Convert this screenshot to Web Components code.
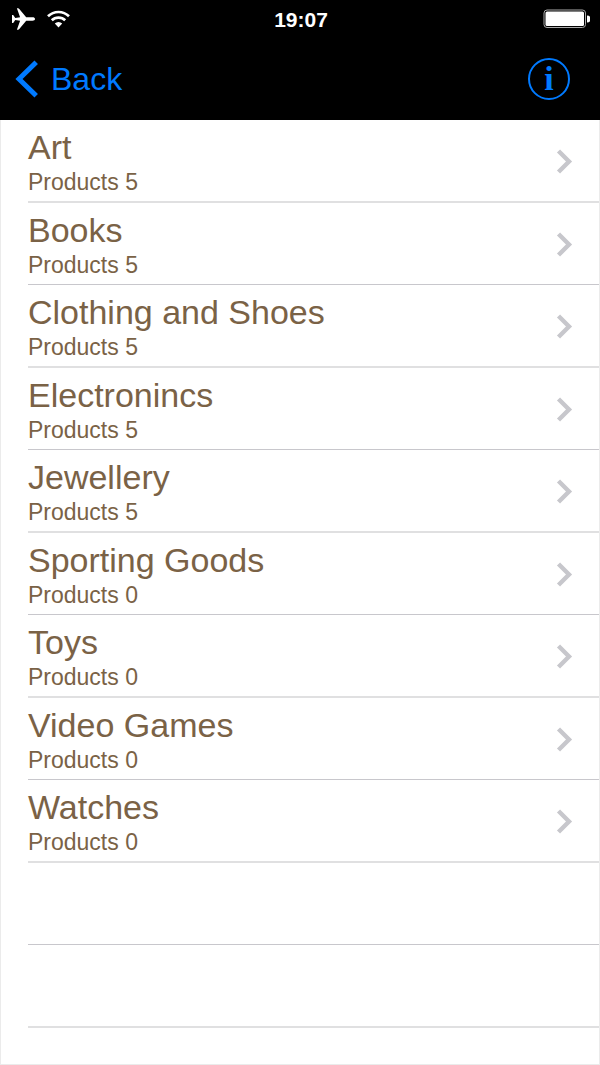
<!DOCTYPE html>
<html lang="en">
<head>
<meta charset="utf-8">
<meta name="viewport" content="width=device-width, initial-scale=1">
<title>Categories</title>
<style>
body { margin: 0; background: #fff; font-family: "Liberation Sans", Arial, sans-serif; }
</style>
</head>
<body>
<catalog-screen>
  <status-bar slot="top" time="19:07"></status-bar>
  <nav-bar slot="top">Back</nav-bar>
  <category-row count="5">Art</category-row>
  <category-row count="5">Books</category-row>
  <category-row count="5">Clothing and Shoes</category-row>
  <category-row count="5">Electronincs</category-row>
  <category-row count="5">Jewellery</category-row>
  <category-row count="0">Sporting Goods</category-row>
  <category-row count="0">Toys</category-row>
  <category-row count="0">Video Games</category-row>
  <category-row count="0">Watches</category-row>
  <category-row></category-row>
  <category-row></category-row>
</catalog-screen>
<script>
class BaseElement extends HTMLElement {
  constructor() {
    super();
    this.attachShadow({ mode: "open" });
  }
  connectedCallback() {
    this.shadowRoot.innerHTML = this.render();
  }
}

customElements.define("catalog-screen", class extends BaseElement {
  render() {
    return `<style>
      :host { display: flex; flex-direction: column; min-height: 100vh; }
      header { background: #000; }
      main { flex: 1; border: 1px solid #ebebeb; border-top: 0; }
      ::slotted(category-row) { height: 82px; --rule: 1px solid #c8c7cc; }
      ::slotted(category-row:nth-of-type(odd)) { height: 83px; --rule: 2px solid #e0e0e1; }
    </style>
    <header><slot name="top"></slot></header>
    <main><slot></slot></main>`;
  }
});

customElements.define("status-bar", class extends BaseElement {
  render() {
    return `<style>
      :host { display: grid; grid-template-columns: 1fr auto 1fr; align-items: center;
        height: 38px; padding: 0 10px 0 12px; color: #fff; }
      svg { display: block; }
      .left { display: flex; gap: 12px; }
      .time { font-size: 21px; line-height: 24px; padding-top: 2px; font-weight: 700; }
      .battery { justify-self: end; }
    </style>
    <div class="left">
      <svg width="23" height="22" viewBox="0 0 23 22" fill="#fff" aria-label="Airplane mode">
        <path d="M23 11c0-1.200-1-1.700-2.500-1.700h-6.300L7.300.9C6.900.4 6.500.2 6 .2H4.900L8.100 9.300 3.300 9.900 1.200 7H0v8h1.200l2.100-2.900 4.800.6L4.900 21.800H6c.5 0 .9-.2 1.300-.7l6.900-8.400h6.300C22 12.700 23 12.200 23 11z"/>
      </svg>
      <svg width="23" height="20" viewBox="0 -2 23 20" fill="none" stroke="#fff" stroke-width="2.700" aria-label="Wi-Fi">
        <path d="M1 6.300a15 15 0 0 1 21 0M4.800 10.300a9.500 9.500 0 0 1 13.400 0"/>
        <path d="M7.800 13.400a5.300 5.300 0 0 1 7.400 0L11.500 17.400z" fill="#fff" stroke="none"/>
      </svg>
    </div>
    <time class="time">${this.getAttribute("time")}</time>
    <svg class="battery" width="47" height="20" viewBox="0 0 47 20" aria-label="Battery full">
      <rect x="1" y="1" width="41.500" height="17.500" rx="3" fill="none" stroke="#aaa"/>
      <rect x="2.500" y="2.500" width="38.500" height="14.500" rx="1.500" fill="#fff"/>
      <path d="M44 6.500a3.500 3.500 0 0 1 0 7z" fill="#fff"/>
    </svg>`;
  }
});

customElements.define("nav-bar", class extends BaseElement {
  render() {
    return `<style>
      :host { display: flex; justify-content: space-between; align-items: center;
        height: 82px; padding: 0 30px 0 15px; box-sizing: border-box; color: #007aff; }
      a { display: flex; align-items: center; gap: 12px; color: inherit; text-decoration: none;
        font-size: 32px; line-height: 38px; }
      button { width: 42px; height: 42px; padding: 0; border: 2px solid #007aff; border-radius: 50%;
        background: none; color: inherit; font: 700 34px/36px "Liberation Serif", serif; }
      svg { display: block; }
    </style>
    <a href="#back">
      <svg width="24" height="38" viewBox="0 0 24 38" fill="none" stroke="#007aff" stroke-width="5" aria-hidden="true">
        <path d="M21.200 2.200 4 19l17.200 16.800"/>
      </svg>
      <slot></slot>
    </a>
    <button type="button" aria-label="Information">i</button>`;
  }
});

customElements.define("category-row", class extends BaseElement {
  render() {
    const count = this.getAttribute("count");
    const content = count === null ? "" : `<a href="#category">
      <span class="text">
        <span class="title"><slot></slot></span>
        <span class="count">Products ${count}</span>
      </span>
      <svg width="17" height="25" viewBox="0 0 17 25" fill="none" stroke="#c7c7cc" stroke-width="4.400" aria-hidden="true">
        <path d="M2.500 2 13 12.500 2.500 23"/>
      </svg>
    </a>`;
    return `<style>
      :host { display: block; box-sizing: border-box; margin-left: 27px; border-bottom: var(--rule); }
      a { display: flex; justify-content: space-between; align-items: flex-start; padding: 8px 26px 0 0;
        color: #7a6246; text-decoration: none; }
      .text { display: flex; flex-direction: column; }
      .title { font-size: 34px; line-height: 38px; }
      .count { font-size: 23px; line-height: 32px; }
      svg { display: block; margin-top: 21px; }
    </style>${content}`;
  }
});
</script>
</body>
</html>
